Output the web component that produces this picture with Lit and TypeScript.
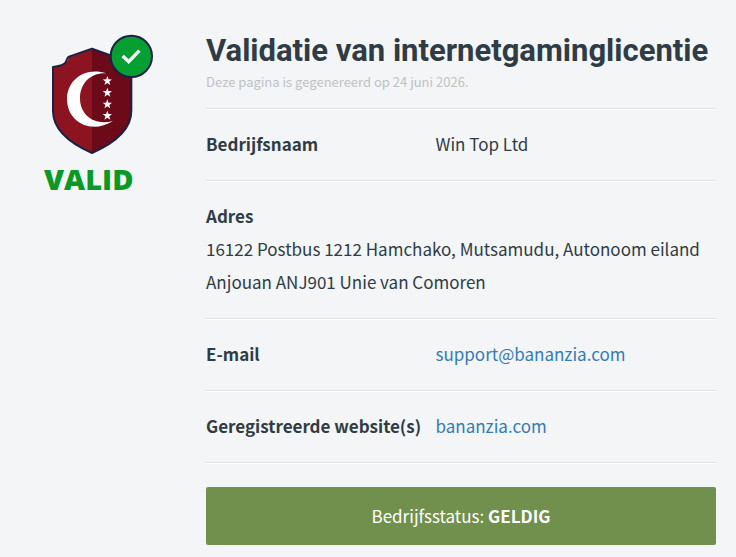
import { LitElement, html, css, svg } from "lit";
import { customElement } from "lit/decorators.js";

const star = (y: number) => svg`
  <path transform="translate(217 ${y})" fill="#fff"
    d="M0-15 3.6-5 14-4.700 5.700 1.800 8.700 12 0 6-8.700 12-5.700 1.800-14-4.700-3.600-5Z"/>`;

@customElement("license-seal")
export class LicenseSeal extends LitElement {
  static styles = css`
    :host { display: block; }
    .shield { display: block; width: 102px; height: 121px; margin-left: 8px; }
    .label {
      margin: 8px 0 0;
      font: 800 29px/32px "Open Sans", sans-serif;
      color: #0a9a24;
    }
  `;

  render() {
    return html`
      <svg class="shield" viewBox="51 27 306 363" role="img" aria-label="Anjouan">
        <path fill="#8b1420" d="M171 71 102 96C98 112 85 124 54 126V258C54 315 105 355 171 384Z"/>
        <path fill="#6c0a1a" d="M171 71 240 96 289 140V258C289 315 237 355 171 384Z"/>
        <path fill="none" stroke="#1b2145" stroke-width="6" stroke-linejoin="round"
          d="M171 71 102 95C94 99 97 107 89 115C79 125 66 122 54 126V258C54 315 105 355 171 384C237 355 289 315 289 258V140L240 96Z"/>
        <path fill="#fff" d="M214 145C150 124 96 165 96 222C96 290 167 330 234 288C182 303 135 274 135 220C135 172 170 142 214 145Z"/>
        ${[168, 203, 238, 272].map(star)}
        <circle cx="289" cy="94" r="62" fill="#06a032" stroke="#1b2145" stroke-width="6"/>
        <path fill="none" stroke="#fff" stroke-width="10" d="M263 93 281 110 313 77"/>
      </svg>
      <p class="label">VALID</p>
    `;
  }
}

@customElement("app-root")
export class AppRoot extends LitElement {
  static styles = css`
    :host {
      display: block;
      box-sizing: border-box;
      min-height: 100vh;
      background: #f3f5f7;
      color: #2f3c45;
      font: 400 17px/33px "Noto Sans CJK SC", sans-serif;
    }
    .page {
      display: grid;
      grid-template-columns: 142px minmax(0, 1fr);
      column-gap: 20px;
      padding: 34px 20px 12px 44px;
    }
    h1 {
      margin: 0;
      font: 700 31px/34px Roboto, sans-serif;
    }
    .generated {
      margin: 0;
      padding: 4px 0 16px;
      font-size: 13px;
      line-height: 20px;
      color: #bfc2c4;
    }
    dl { margin: 0 0 24px; border-bottom: 1px solid #dfe1e3; box-shadow: 0 1px #fff; }
    .row {
      display: grid;
      grid-template-columns: 45% 1fr;
      padding: 18px 0 19px;
      border-top: 1px solid #dfe1e3;
      box-shadow: inset 0 1px #fff;
      margin-bottom: 1px;
    }
    .wide { grid-template-columns: 1fr; }
    dt { font-weight: 700; }
    dd { margin: 0; }
    a { color: #337ab7; text-decoration: none; }
    .status {
      padding: 12px 12px 13px;
      border-radius: 2px;
      background: #718f4d;
      color: #fff;
      text-align: center;
    }
  `;

  render() {
    return html`
      <main class="page">
        <license-seal></license-seal>
        <section>
          <h1>Validatie van internetgaminglicentie</h1>
          <p class="generated">Deze pagina is gegenereerd op 24 juni 2026.</p>
          <dl>
            <div class="row"><dt>Bedrijfsnaam</dt><dd>Win Top Ltd</dd></div>
            <div class="row wide">
              <dt>Adres</dt>
              <dd>16122 Postbus 1212 Hamchako, Mutsamudu, Autonoom eiland Anjouan ANJ901 Unie van Comoren</dd>
            </div>
            <div class="row">
              <dt>E-mail</dt>
              <dd><a href="mailto:support@bananzia.com">support@bananzia.com</a></dd>
            </div>
            <div class="row">
              <dt>Geregistreerde website(s)</dt>
              <dd><a href="https://bananzia.com">bananzia.com</a></dd>
            </div>
          </dl>
          <div class="status" role="status">Bedrijfsstatus: <strong>GELDIG</strong></div>
        </section>
      </main>
    `;
  }
}
